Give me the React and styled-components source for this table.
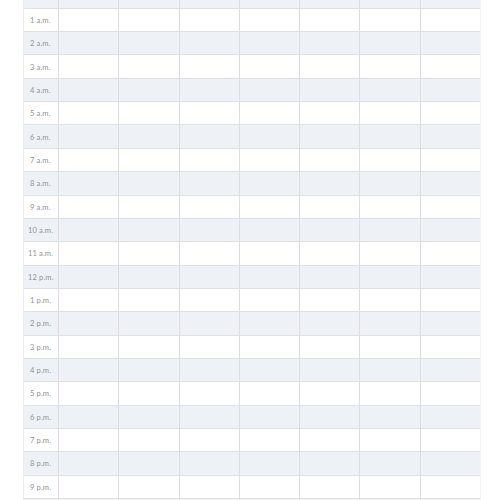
import React from "react";
import styled, { createGlobalStyle } from "styled-components";

const Global = createGlobalStyle`
  html, body { margin: 0; padding: 0; background: #ffffff; overflow: hidden; }
  body { font-family: "Noto Sans", "DejaVu Sans", sans-serif; }
`;

const Page = styled.div`
  width: 500px;
  height: 500px;
  overflow: hidden;
  padding-left: 23px;
  box-sizing: border-box;
`;

const Grid = styled.div`
  margin-top: -14.6px;
  width: 458px;
  display: grid;
  grid-template-columns: 35px repeat(7, 1fr);
  border-left: 1px solid #e6e8eb;
  box-sizing: border-box;
`;

const Cell = styled.div`
  height: 23.35px;
  box-sizing: border-box;
  border-bottom: 1px solid #dfe1e4;
  border-right: 1px solid ${(p) => (p.$last ? "#f3f4f5" : "#dcdde0")};
  background: ${(p) => (p.$striped ? "#eef2f6" : "#ffffff")};
`;

const TimeCell = styled(Cell)`
  display: flex;
  align-items: center;
  padding-left: ${(p) => (p.$wide ? "4px" : "6px")};
  padding-top: 1px;
  font-family: "Lato", "Noto Sans", sans-serif;
  font-size: 7.5px;
  letter-spacing: 0.15px;
  color: #909398;
  white-space: nowrap;
`;

const hours = [];
for (let h = 0; h < 23; h++) {
  const ampm = h < 12 ? "a.m." : "p.m.";
  const n = h % 12 === 0 ? 12 : h % 12;
  hours.push({ label: `${n} ${ampm}`, striped: h % 2 === 0, wide: n >= 10 });
}

export default function App() {
  return (
    <>
      <Global />
      <Page>
        <Grid>
          {hours.map((r, i) => (
            <React.Fragment key={i}>
              <TimeCell $striped={r.striped} $wide={r.wide}>{r.label}</TimeCell>
              {Array.from({ length: 7 }).map((_, d) => (
                <Cell key={d} $striped={r.striped} $last={d === 6} />
              ))}
            </React.Fragment>
          ))}
        </Grid>
      </Page>
    </>
  );
}
